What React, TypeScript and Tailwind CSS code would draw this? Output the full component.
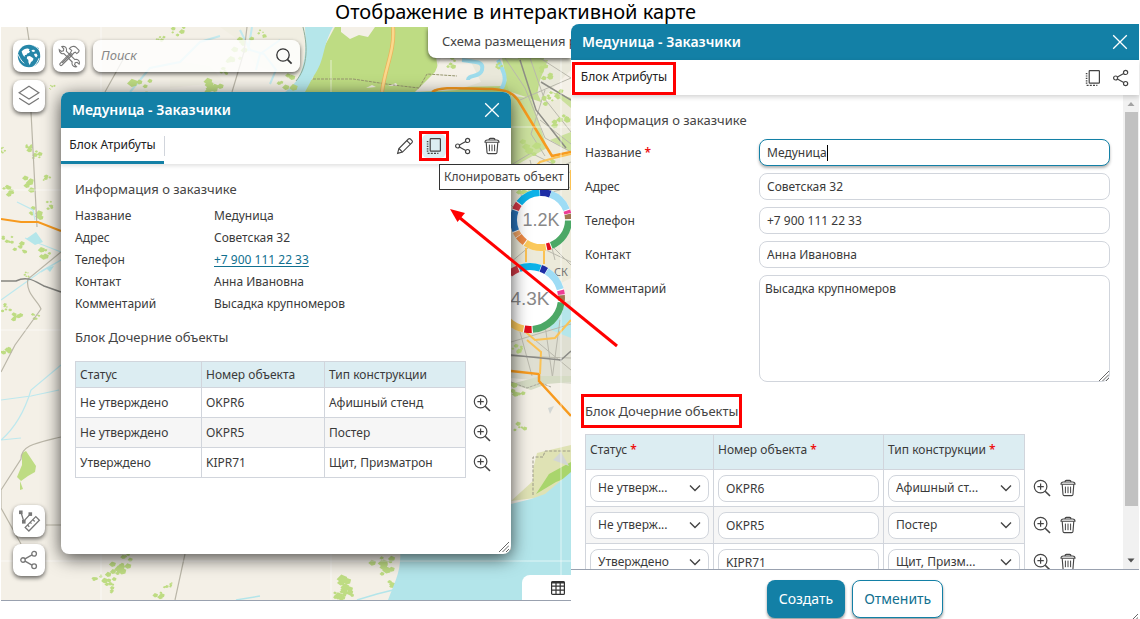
import { useState } from 'react';
import type { ReactNode } from 'react';

/* ---------- icons ---------- */

function Svg({ size = 18, sw = 1.2, className = '', children }: { size?: number; sw?: number; className?: string; children: ReactNode }) {
  return (
    <svg width={size} height={size} viewBox="0 0 18 18" fill="none" stroke="currentColor" strokeWidth={sw} aria-hidden="true" className={`shrink-0 ${className}`}>
      {children}
    </svg>
  );
}

const CloseIcon = () => <Svg sw={1.3}><path d="M2.2 2.2l13.6 13.6M15.8 2.2L2.2 15.8" /></Svg>;

const PencilIcon = () => (
  <Svg sw={1.1}>
    <path d="M1.6 16.4l1.3-4.9L12.4 2a1.4 1.4 0 0 1 2 0l1.6 1.6a1.4 1.4 0 0 1 0 2L6.5 15.1z" />
    <path d="M2.9 11.5l3.6 3.6M10.8 3.6l3.6 3.6" />
  </Svg>
);

const CloneIcon = () => (
  <Svg>
    <rect x="5.2" y="1.6" width="10.2" height="12.6" rx="0.6" />
    <path d="M2.6 4v12" strokeDasharray="1.2 1.2" strokeWidth="1.6" />
    <path d="M2.6 16.4h10.8" strokeDasharray="2 1.2" />
  </Svg>
);

const ShareIcon = ({ size = 18 }: { size?: number }) => (
  <Svg size={size}>
    <circle cx="3.6" cy="9" r="2" />
    <circle cx="13.6" cy="3.4" r="2.1" />
    <circle cx="13.6" cy="14.6" r="2.1" />
    <path d="M5.4 8l6.3-3.6M5.4 10l6.3 3.6" />
  </Svg>
);

const TrashIcon = () => (
  <Svg sw={1.1}>
    <path d="M2 5.2c0-1.5.8-2.2 2.3-2.2h9.4c1.5 0 2.3.7 2.3 2.2zM6 2.8c0-1 .6-1.4 1.4-1.4h3.2c.8 0 1.4.4 1.4 1.4" />
    <path d="M3.2 5.4l.8 10c.1.8.6 1.2 1.3 1.2h7.4c.7 0 1.2-.4 1.3-1.2l.8-10" />
    <path d="M6.4 7.6v6.6M9 7.6v6.6M11.6 7.6v6.6" strokeWidth="1" />
  </Svg>
);

const ZoomInIcon = () => (
  <Svg>
    <circle cx="7.6" cy="7.6" r="6.3" />
    <path d="M4.4 7.6h6.4M7.6 4.4v6.4" />
    <path d="M12.2 12.2l4.8 4.8" strokeWidth="1.6" />
  </Svg>
);

const SearchIcon = () => (
  <Svg sw={1.3}>
    <circle cx="8" cy="8" r="6.2" />
    <path d="M12.6 12.6l4 4" strokeWidth="1.7" />
  </Svg>
);

const LayersIcon = () => (
  <Svg size={24} sw={0.9}>
    <path d="M9 1.6l7.4 4.9L9 11.2 1.6 6.5z" />
    <path d="M1.6 10.6L9 15.4l7.4-4.8" />
  </Svg>
);

const ToolsIcon = () => (
  <svg width="24" height="24" viewBox="0 0 24 24" fill="none" stroke="#777" strokeWidth="1.1" aria-hidden="true">
    <path d="M2.2 5.6l2.2 1.8 2-.6.4-2-1.9-2.2c2-.8 4.4.5 4.6 2.6.1.9 0 1.4-.2 2l8.6 8.4c1.8-.7 4.2.2 4.5 2.6.1.8 0 1.4-.3 2l-2-1.900-1.900.5-.6 1.900 1.900 2c-1.800.5-4.200-.6-4.500-2.900-.1-.7 0-1.300.2-1.800L6.900 9.600c-1.900.6-4.800-.9-4.700-4z" />
    <path d="M13.200 9.200L3 19.600c-.9.9.8 2.600 1.700 1.700L15.200 11" />
    <path d="M12.400 4.600c1.400-2 4.600-3.100 6.700-1.300l3 3-.4 1.600-1.900 1.700-1.500-1.400-1.300.6-1.700 1.800-1.900-1.800 1.300-2.400z" />
    <path d="M5.200 19L14 10.200" />
  </svg>
);

const MeasureIcon = () => (
  <svg width="24" height="24" viewBox="0 0 24 24" fill="none" stroke="#777" strokeWidth="1.300" aria-hidden="true">
    <path d="M4 3.200l2.700 9L13 5.400" />
    <g fill="#777" stroke="none">
      <rect x="2" y="1.500" width="3.600" height="3.600" />
      <rect x="5" y="11" width="3.600" height="3.600" />
      <rect x="11.500" y="3.300" width="3.600" height="3.600" />
    </g>
    <path d="M8.200 18.400L18.800 7.600l3.600 3.700L11.900 22z" />
    <path d="M10.500 16l1.800 1.800M13.200 13.300l1.300 1.300M15.800 10.600l1.900 1.900" />
  </svg>
);

const GlobeIcon = () => (
  <svg width="24" height="24" viewBox="0 0 24 24" aria-hidden="true">
    <circle cx="12" cy="12" r="11.200" fill="#2586a8" />
    <path d="M14.500.8l7 3.200 1.700 9.200-2-1.500z" fill="#2586a8" />
    <path d="M4.600 7.600c1.700-2.200 4-3.200 6.400-3l1.600 1-.8 1.200 1.300.8-1.100 1.400-1.800.5-.8 1.500-1.700.1.600 1.400-1.400-.3-1.200-1.700z" fill="#fff" />
    <path d="M10.200 12.600l2.600-.5 2.400 1.400 1.400 1.200-1.100 2.200-1.500 1.100-1.300 3-1.200-2.400-.2-2.600-1.500-1.500z" fill="#fff" />
    <path d="M14.600 6l2.400-.3 1.200 1.300-1.300 1-2-.6zM17 10l2.400-.5 1.200 2-1.300 2-1.500-1.200z" fill="#fff" />
    <path d="M.5 9.500c1.800 2.900 3 7 6.600 9.800M14 .4c3.200 1.700 6.200 2.300 9 7M15.500 23.200c3-2 5.200-5.300 6.500-9" fill="none" stroke="#fff" strokeWidth=".9" />
  </svg>
);

const GridIcon = () => (
  <svg width="14" height="14" viewBox="0 0 14 14" fill="none" stroke="#333" strokeWidth="1.200" aria-hidden="true">
    <rect x=".6" y=".6" width="12.800" height="12.800" rx="1" />
    <path d="M.6 1.500h12.800" strokeWidth="2" />
    <path d="M.6 5.200h12.800M.6 9.200h12.800M5 1v12.400M9.200 1v12.400" />
  </svg>
);

const Grip = () => (
  <svg width="10" height="10" viewBox="0 0 10 10" stroke="#666" strokeWidth="1" aria-hidden="true">
    <path d="M0 10L10 0M3.500 10L10 3.500M7 10l3-3" />
  </svg>
);

const Chevron = () => (
  <svg width="12" height="12" viewBox="0 0 12 12" fill="none" stroke="#444" strokeWidth="1.400" aria-hidden="true" className="pointer-events-none absolute top-1/2 right-2 -translate-y-1/2">
    <path d="M1 3.500l5 5 5-5" />
  </svg>
);

/* ---------- map ---------- */

type Segment = [number, number, string];

const SMALL_RING: Segment[] = [
  [-2, 20, '#1e2ea6'], [20, 68, '#9edcf5'], [70, 77, '#ee3d96'], [78, 88, '#a07850'], [91, 158, '#4ca866'], [160, 168, '#e30e1c'],
  [170, 214, '#fbc95c'], [216, 234, '#ee8a45'], [235, 245, '#f0a566'], [247, 290, '#2b75bd'], [292, 306, '#d43a47'], [308, 357, '#0cb2e8'],
];
const BIG_RING: Segment[] = [
  [-20, 19, '#0cb2e8'], [20, 31, '#1e2ea6'], [32, 74, '#9edcf5'], [76, 84, '#ee3d96'], [85, 95, '#a07850'], [98, 175, '#4ca866'],
  [177, 190, '#e30e1c'], [192, 250, '#fbc95c'], [252, 318, '#2b75bd'], [320, 338, '#d43a47'],
];

function arc(cx: number, cy: number, r: number, from: number, to: number) {
  const p = (a: number) => {
    const t = ((a - 90) * Math.PI) / 180;
    return `${(cx + r * Math.cos(t)).toFixed(2)} ${(cy + r * Math.sin(t)).toFixed(2)}`;
  };
  return `M${p(from)}A${r} ${r} 0 0 1 ${p(to)}`;
}

function Cluster({ cx, cy, r, label, size, segments }: { cx: number; cy: number; r: number; label: string; size: number; segments: Segment[] }) {
  return (
    <g>
      <circle cx={cx} cy={cy} r={r} fill="#fff" />
      {segments.map(([a, b, c]) => <path key={a} d={arc(cx, cy, r - 3.5, a, b)} stroke={c} strokeWidth="7" fill="none" />)}
      <text x={cx} y={cy + size * 0.36} textAnchor="middle" fontSize={size} fill="#888" fontFamily="Liberation Sans, sans-serif">{label}</text>
    </g>
  );
}

const GROVES: [number, number, number][] = [
  [25, 184, 5], [36, 212, 5], [9, 190, 4], [45, 253, 5], [34, 153, 4], [28, 144, 3], [18, 319, 4], [36, 318, 3], [6, 308, 3], [5, 352, 4],
  [19, 247, 4], [8, 238, 4], [50, 205, 3], [46, 178, 3], [27, 275, 2], [3, 150, 2], [70, 58, 3], [52, 88, 2], [140, 86, 7], [205, 86, 6], [215, 88, 5],
  [235, 55, 6], [246, 45, 5], [286, 80, 6], [160, 40, 3], [178, 31, 4], [262, 33, 3], [224, 72, 3], [118, 568, 6], [125, 560, 5], [108, 578, 5],
  [114, 588, 4], [97, 578, 3], [160, 597, 4], [168, 586, 3], [380, 558, 6], [388, 566, 6], [343, 587, 7], [350, 595, 5], [337, 598, 5],
  [394, 582, 4], [518, 388, 5], [519, 428, 4], [530, 148, 6], [560, 120, 5], [550, 165, 4], [545, 100, 4], [525, 190, 5], [560, 180, 5],
  [500, 66, 3], [548, 72, 5], [556, 96, 4], [450, 62, 4], [516, 350, 4],
];

/* Scatters a few irregular patches around each grove's centre. */
function grovePath([x, y, r]: [number, number, number], seed: number) {
  const rnd = (n: number) => {
    const v = Math.sin(seed * 37.7 + n * 91.3) * 4373.1;
    return v - Math.floor(v);
  };
  let d = '';
  for (let k = 0; k < 6; k++) {
    const px = x + (rnd(k) - 0.5) * r * 2.8;
    const py = y + (rnd(k + 9) - 0.5) * r * 2.6;
    const s = r * (0.35 + rnd(k + 20) * 0.5);
    d += `M${px.toFixed(1)} ${(py - s * 0.7).toFixed(1)}l${s.toFixed(1)} ${(s * 0.4).toFixed(1)} ${(-s * 0.2).toFixed(1)} ${(s * 0.8).toFixed(1)} ${(-s * 0.8).toFixed(1)} ${(s * 0.2).toFixed(1)} ${(-s * 0.8).toFixed(1)} ${(-s * 0.6).toFixed(1)}z`;
  }
  return d;
}

const STREETS =
  'M505 58l20 30 20 50 26 14M520 100l51-22M530 58l14 40 27 34M511 165l20-12 40 20M540 58l31 20M545 90l-14 44 14 22M511 190l60-28M511 205l60 60M530 160l25 100M511 262l60-50M525 240l46 22M511 342l60-18M520 332l12 44M545 325l8 56M560 320l-8 60M511 356l60 2M535 340l36 30M511 175l30 20 30-8M540 120l31 24M520 190l14 60';

function MapCanvas() {
  return (
    <svg className="absolute inset-0 size-full" viewBox="1 27 570 573" preserveAspectRatio="xMidYMin slice" role="img" aria-label="Карта">
      <rect x="1" y="27" width="570" height="573" fill="#f4f0e7" />
      <path d="M220 27l20 14 16 24 20 8 30 8V27zM170 60l40 6 14 16-54 6z" fill="#f1eee2" />
      <path d="M240 30l10 20 14 4 12 16-6 14M252 27l-4 24M130 92l20-24 30-6 20-20 20-6M280 40l-20 14-4 16" stroke="#c3e9ee" strokeWidth="2" fill="none" />

      <path d="M334 27h240v40l-32 32-4 40 33 8v26H511V92H300l14-24z" fill="#e9e8da" />
      <path d="M335 27h97l8 58 20 2 44-1 14-28h26l-8 42-18 50H300V92l13-14 4-18z" fill="#bedc83" />
      <path d="M502 58l46 2-12 30 20 44-22 20-12-40-14-26z" fill="#c3dd8e" />
      <path d="M341 27h34l-7 10-9-2-9 4-9-7zM415 92l20-20 6-14 30 4 10 20-24 8zM388 86l8-3 2 3zM366 88l6-3 4 2z" fill="#f4f0e7" />
      <path d="M305 27h28c-12 22-7 32-20 50l-8 15h-20c18-12 22-32 20-65z" fill="#b5e6ea" />
      <path d="M303 27c6 24 3 42-7 54" stroke="#8fae9a" strokeWidth="1" fill="none" />
      <path d="M462 60c16 2 22 2 20 10s-14 4-14 10M498 60c6 12 10 20 3 29" stroke="#9edcec" strokeWidth="4" fill="none" />
      <path d="M313 79h40l40 6 26 3 8-14 30 2" stroke="#96966e" strokeDasharray="3 1" fill="none" />

      <path d="M511 92l30 10 30-4v180l-60 30z" fill="#eceada" />
      <path d="M511 96l20 2 16 50-36 20zM550 140l21-8v20zM552 92l19 6v10z" fill="#cbe09d" />
      <path d="M511 320l60-20v84l-60-6z" fill="#dfdfd2" />
      <path d="M540 300l31 8v30l-20-8z" fill="#b5e6ea" />
      <path d={STREETS} stroke="#b9b8ac" strokeWidth="1" fill="none" />
      <path d="M520 60l16 50 30 38M571 100l-30-18" stroke="#8d8d86" strokeWidth="1.500" fill="none" />
      <path d="M511 384l20 6 16-6 24-2v-6h-30z" fill="#d5dbc4" />
      <path d="M511 382l16 6 14-5 10 4" stroke="#aaa99c" strokeDasharray="3 1" fill="none" />

      {GROVES.map((g, i) => <path key={i} d={grovePath(g, i + 1)} fill="#bedc83" />)}
      <path d="M22 453l4-2 10 15-1 6-7 4-7 5-4-4 5-12zM20 481l3 8-3 1z" fill="#bedc83" />

      <path d="M17 202l16 8 2 10M25 238l36 14M61 260l-18 10-42 30M1 400l30-4 28-6M1 440c14-12 24-30 30-50l30-25M1 440l20-2M61 260l-20 12" stroke="#bde8ee" strokeWidth="1.200" fill="none" />
      <path d="M26 239l10-7 7 10-8 3z M46 268l8-2-4 6z" fill="#b5e6ea" />
      <path d="M31 112l6 115M61 252L28 279c-3 14 10 22 13 30L15 345 1 372M61 437c-24 6-40 8-40 22L1 490v18l20 36M46 525h15M185 554l-10 46M27 27l2 13M105 92l20-36M232 92l12-40 3-25" stroke="#bab6a8" strokeWidth="1.200" fill="none" />
      <path d="M1 281h15c12-6 20 1 28 5l17 6" stroke="#858580" strokeWidth="1.500" fill="none" />
      <path d="M1 219l20 3h17l23 9" stroke="#f79a1e" strokeWidth="2" fill="none" />
      <path d="M393 27c2 24-8 40-11 65" stroke="#e9b45c" strokeWidth="4" fill="none" />
      <path d="M393 27c2 24-8 40-11 65" stroke="#fbd88c" strokeWidth="2.500" fill="none" />
      <path d="M432 92c8-5 20-4 60-3 14 1 20 3 26 11l34 56 19-4M511 371l28 3v7l32 35" stroke="#f79a1e" strokeWidth="2.500" fill="none" />
      <path d="M532 170l8-8 14-4 17-4M527 340l14 12-1 22M571 170v20M544 250v14M526 248v14M571 320l-16 18-20 2-14-12" stroke="#fbc254" strokeWidth="2" fill="none" />
      <path d="M511 355l50 5 10-9" stroke="#8a8a86" strokeWidth="1.500" fill="none" />

      <path d="M511 501l22-20v-12l4-16 34-8v32l-28 20z" fill="#dfe2b4" />
      <path d="M536 494l20-12 15-6v-14l-22 12z" fill="#a9d56c" />
      <path d="M548 408l6-2-4 8zM553 460l8-8 8 14z" fill="#d2d6d4" />
      <path d="M533 495v-38h10l2-6h26" stroke="#9c9a88" strokeDasharray="3 1.500" fill="none" />
      <path d="M388 600c6-16 14-30 12-50h111v-46l20-5 14-5 26-22v128z" fill="#b3e5ea" />
      <path d="M357 600l20-6 16-4M236 600l24-4" stroke="#b3e5ea" strokeWidth="1.500" fill="none" />
      <path d="M101 27v65M1 190h60M1 330h60M1 561h570M101 554v46M331 554v46M561 58v542M331 60v32M511 127h60" stroke="#fff" strokeOpacity=".6" fill="none" />

      <Cluster cx={541} cy={220} r={31} label="1.2K" size={18} segments={SMALL_RING} />
      <text x="554" y="276" fontSize="11" fill="#777" fontFamily="Noto Sans, sans-serif">СК</text>
      <Cluster cx={530} cy={298} r={35} label="4.3K" size={19} segments={BIG_RING} />
    </svg>
  );
}

/* ---------- shared data ---------- */

const OBJECTS = [
  { status: 'Не утверждено', shortStatus: 'Не утверж...', number: 'OKPR6', type: 'Афишный стенд', shortType: 'Афишный ст...' },
  { status: 'Не утверждено', shortStatus: 'Не утверж...', number: 'OKPR5', type: 'Постер', shortType: 'Постер' },
  { status: 'Утверждено', shortStatus: 'Утверждено', number: 'KIPR71', type: 'Щит, Призматрон', shortType: 'Щит, Призм...' },
];

const DETAILS: [string, ReactNode][] = [
  ['Название', 'Медуница'],
  ['Адрес', 'Советская 32'],
  ['Телефон', <a href="tel:+79001112233" className="text-[#11708f] underline underline-offset-2">+7 900 111 22 33</a>],
  ['Контакт', 'Анна Ивановна'],
  ['Комментарий', 'Высадка крупномеров'],
];

function MapButton({ label, children }: { label: string; children: ReactNode }) {
  return (
    <button type="button" aria-label={label} className="flex size-8 items-center justify-center rounded-lg bg-white text-[#777] shadow-[0_2px_4px_rgba(0,0,0,0.6)]">
      {children}
    </button>
  );
}

function IconButton({ label, children }: { label: string; children: ReactNode }) {
  return <button type="button" aria-label={label} className="flex shrink-0 text-[#444]">{children}</button>;
}

function WindowHeader() {
  return (
    <header className="flex h-9 shrink-0 items-center justify-between bg-[#1380a6] pr-[10px] pl-[11px] text-white">
      <h2 className="text-sm font-semibold">Медуница - Заказчики</h2>
      <button type="button" aria-label="Закрыть" className="flex">
        <CloseIcon />
      </button>
    </header>
  );
}

/* ---------- left: object card over the map ---------- */

function ObjectCard() {
  return (
    <section className="absolute top-[65px] left-[60px] flex h-[462px] w-[450px] flex-col rounded-lg bg-white shadow-[0_4px_18px_rgba(0,0,0,0.7)]">
      <div className="overflow-hidden rounded-t-lg">
        <WindowHeader />
      </div>
      <div className="flex h-9 shrink-0 items-stretch justify-between pr-[10px] shadow-[0_2px_4px_rgba(0,0,0,0.12)]">
        <button type="button" className="flex w-[103px] items-center justify-center border-b-3 border-[#1380a6] text-xs whitespace-nowrap text-[#222]">
          Блок Атрибуты
        </button>
        <div className="mr-auto h-5 w-px self-center bg-gray-300" />
        <div className="flex items-center gap-[11px]">
          <IconButton label="Редактировать"><PencilIcon /></IconButton>
          <div className="relative -mx-[6px]">
            <button type="button" aria-label="Клонировать объект" className="flex size-[30px] items-center justify-center border-3 border-[#f00] bg-white text-[#444]">
              <span className="flex size-6 items-center justify-center rounded-md bg-[#dcedf2]"><CloneIcon /></span>
            </button>
            <div role="tooltip" className="absolute top-[33px] left-5 z-10 border border-[#333] bg-white px-1 py-[3px] text-xs leading-[18px] whitespace-nowrap text-[#444]">
              Клонировать объект
            </div>
          </div>
          <IconButton label="Поделиться"><ShareIcon /></IconButton>
          <IconButton label="Удалить"><TrashIcon /></IconButton>
        </div>
      </div>
      <div className="flex-1 px-[14px] pt-[15px] text-xs text-[#3a3a3a]">
        <h3 className="text-[13px] leading-5 text-[#444]">Информация о заказчике</h3>
        <dl className="mt-[6px] grid grid-cols-[139px_1fr] leading-[22px]">
          {DETAILS.map(([name, value]) => (
            <div key={name} className="contents">
              <dt>{name}</dt>
              <dd>{value}</dd>
            </div>
          ))}
        </dl>
        <h3 className="mt-[12px] text-[13px] leading-5 text-[#444]">Блок Дочерние объекты</h3>
        <table className="mt-[14px] w-full table-fixed border-collapse text-left">
          <colgroup>
            <col className="w-[126px]" />
            <col className="w-[123px]" />
            <col />
            <col className="w-[32px]" />
          </colgroup>
          <thead>
            <tr className="h-[26px]">
              {['Статус', 'Номер объекта', 'Тип конструкции'].map((h) => (
                <th key={h} scope="col" className="border border-gray-300 bg-[#dcedf2] px-1 font-normal">{h}</th>
              ))}
              <td />
            </tr>
          </thead>
          <tbody>
            {OBJECTS.map((o) => (
              <tr key={o.number} className="group h-[30px]">
                {[o.status, o.number, o.type].map((v) => (
                  <td key={v} className="border border-gray-300 px-1 group-even:bg-[#f6f6f6]">{v}</td>
                ))}
                <td className="pl-[7px]"><IconButton label={`Показать ${o.number}`}><ZoomInIcon /></IconButton></td>
              </tr>
            ))}
          </tbody>
        </table>
      </div>
      <div className="flex justify-end p-[2px]"><Grip /></div>
    </section>
  );
}

function MapPanel() {
  return (
    <div className="relative mt-[3px] -mr-px mb-[18px] ml-px overflow-hidden border-b border-gray-400">
      <MapCanvas />
      <div className="relative flex h-full flex-col justify-between py-[13px] pl-3">
        <div className="flex flex-col gap-2">
          <div className="flex gap-2">
            <MapButton label="Глобус"><GlobeIcon /></MapButton>
            <MapButton label="Инструменты"><ToolsIcon /></MapButton>
            <label className="flex h-8 w-[207px] items-center rounded-lg bg-white/80 pr-[7px] pl-2 text-[#333] shadow-[0_2px_4px_rgba(0,0,0,0.6)]">
              <input type="search" aria-label="Поиск" placeholder="Поиск" className="min-w-0 flex-1 bg-transparent text-[13px] italic outline-none placeholder:text-[#888]" />
              <SearchIcon />
            </label>
          </div>
          <MapButton label="Слои"><LayersIcon /></MapButton>
        </div>
        <div className="mb-[11px] flex flex-col gap-[7px]">
          <MapButton label="Измерения"><MeasureIcon /></MapButton>
          <MapButton label="Поделиться картой"><ShareIcon size={20} /></MapButton>
        </div>
      </div>
      <div className="absolute top-0 right-0 h-[31px] w-[143px] overflow-hidden rounded-bl-lg bg-white pl-[14px] text-[13px] leading-7 whitespace-nowrap text-[#444] shadow-[0_2px_4px_rgba(0,0,0,0.6)]">
        Схема размещения р
      </div>
      <button type="button" aria-label="Таблица" className="absolute right-0 bottom-0 flex h-[25px] w-[49px] items-center justify-end rounded-tl-lg bg-white pr-[6px]">
        <GridIcon />
      </button>
      <ObjectCard />
    </div>
  );
}

/* ---------- right: clone form ---------- */

const Star = () => <span className="font-semibold text-[#e11]">*</span>;

const FIELD = 'h-[27px] w-full rounded-lg border border-gray-300 bg-white px-[7px] text-xs text-[#3a3a3a] outline-none';

const FIELDS = [
  { id: 'name', label: 'Название', value: 'Медуница', required: true },
  { id: 'address', label: 'Адрес', value: 'Советская 32' },
  { id: 'phone', label: 'Телефон', value: '+7 900 111 22 33' },
  { id: 'contact', label: 'Контакт', value: 'Анна Ивановна' },
];

function Dropdown({ value, label }: { value: string; label: string }) {
  return (
    <div className="relative">
      <select aria-label={label} className={`${FIELD} appearance-none pr-6`} defaultValue={value}>
        <option>{value}</option>
      </select>
      <Chevron />
    </div>
  );
}

function CloneForm() {
  const [values, setValues] = useState<Record<string, string>>(Object.fromEntries(FIELDS.map((f) => [f.id, f.value])));
  return (
    <form className="z-10 ml-px flex min-h-0 flex-col overflow-hidden rounded-tl-lg bg-white pr-px" onSubmit={(e) => e.preventDefault()}>
      <WindowHeader />
      <div className="z-10 flex h-[35px] shrink-0 items-center justify-between bg-white pr-[9px] pl-px shadow-[0_2px_5px_rgba(0,0,0,0.18)]">
        <button type="button" className="mt-[2px] h-[33px] w-[104px] border-3 border-[#f00] pb-[3px] text-xs whitespace-nowrap text-[#222]">Блок Атрибуты</button>
        <div className="flex items-center gap-[10px]">
          <IconButton label="Клонировать объект"><CloneIcon /></IconButton>
          <IconButton label="Поделиться"><ShareIcon /></IconButton>
        </div>
      </div>

      <div className="flex min-h-0 flex-1 border-b border-gray-400">
        <div className="flex-1 overflow-y-auto pt-[15px] pr-[13px] pl-[14px] text-xs text-[#3a3a3a] [scrollbar-width:none]">
          <h3 className="text-[13px] leading-5 text-[#444]">Информация о заказчике</h3>
          <div className="mt-[9px] grid grid-cols-[174px_1fr] gap-y-[7px]">
            {FIELDS.map((f) => (
              <div key={f.id} className="contents">
                <label htmlFor={f.id} className="leading-[27px]">{f.label} {f.required && <Star />}</label>
                <div className="relative">
                  <input
                    id={f.id}
                    value={values[f.id]}
                    onChange={(e) => setValues({ ...values, [f.id]: e.target.value })}
                    className={f.required ? 'h-[27px] w-full rounded-lg border border-[#1380a6] bg-white px-[7px] text-xs text-[#3a3a3a] shadow-[0_2px_3px_rgba(0,0,0,0.3)] outline-none' : FIELD}
                  />
                  {f.required && (
                    <span aria-hidden="true" className="pointer-events-none absolute top-[6px] left-2 flex text-xs">
                      <span className="invisible">{values[f.id]}</span>
                      <span className="h-4 w-px bg-black" />
                    </span>
                  )}
                </div>
              </div>
            ))}
            <label htmlFor="comment" className="leading-[27px]">Комментарий</label>
            <div className="relative">
              <textarea id="comment" defaultValue="Высадка крупномеров" className="block h-[107px] w-full resize-none rounded-lg border border-gray-300 px-[5px] py-[3px] text-xs leading-5 outline-none" />
              <span className="pointer-events-none absolute right-px bottom-px"><Grip /></span>
            </div>
          </div>
          <h3 className="mt-[12px] -ml-1 w-fit border-3 border-[#f00] px-px py-[4px] text-[13px] leading-5 text-[#444]">Блок Дочерние объекты</h3>
          <table className="mt-[6px] w-[493px] table-fixed border-collapse text-left">
            <colgroup>
              <col className="w-[128px]" />
              <col className="w-[170px]" />
              <col className="w-[141px]" />
              <col />
            </colgroup>
            <thead>
              <tr className="h-[35px]">
                {['Статус', 'Номер объекта', 'Тип конструкции'].map((h) => (
                  <th key={h} scope="col" className="border border-gray-300 bg-[#dcedf2] px-1 pb-1 font-normal whitespace-nowrap">{h} <Star /></th>
                ))}
                <td />
              </tr>
            </thead>
            <tbody>
              {OBJECTS.map((o) => (
                <tr key={o.number} className="group h-[37px]">
                  <td className="border border-gray-300 px-1 group-even:bg-[#f6f6f6]"><Dropdown value={o.shortStatus} label="Статус" /></td>
                  <td className="border border-gray-300 px-1 group-even:bg-[#f6f6f6]"><input aria-label="Номер объекта" defaultValue={o.number} className={FIELD} /></td>
                  <td className="border border-gray-300 px-1 group-even:bg-[#f6f6f6]"><Dropdown value={o.shortType} label="Тип конструкции" /></td>
                  <td className="pl-2">
                    <div className="flex gap-2">
                      <IconButton label={`Показать ${o.number}`}><ZoomInIcon /></IconButton>
                      <IconButton label={`Удалить ${o.number}`}><TrashIcon /></IconButton>
                    </div>
                  </td>
                </tr>
              ))}
            </tbody>
          </table>
        </div>
        <div aria-hidden="true" className="flex w-4 shrink-0 flex-col items-center bg-[#f1f1f1]">
          <svg width="16" height="17" viewBox="0 0 16 17"><path d="M4.500 11L8 7l3.500 4z" fill="#a3a3a3" /></svg>
          <div className="w-[13px] grow-[395] bg-[#c1c1c1]" />
          <div className="grow-[46]" />
          <svg width="16" height="17" viewBox="0 0 16 17"><path d="M4.500 6.500L8 10.500l3.500-4z" fill="#505050" /></svg>
        </div>
      </div>

      <footer className="relative flex h-[49px] shrink-0 items-end justify-center gap-[7px] pb-px">
        <button type="submit" className="h-[38px] rounded-lg bg-[#1380a6] px-3 text-sm text-white shadow-[0_2px_3px_rgba(0,0,0,0.4)]">Создать</button>
        <button type="button" className="h-[38px] rounded-lg border border-[#1380a6] bg-white px-[11px] text-sm text-[#11708f] shadow-[0_2px_3px_rgba(0,0,0,0.4)]">Отменить</button>
        <span className="absolute right-px bottom-0 h-[7px] w-2 overflow-hidden"><Grip /></span>
      </footer>
    </form>
  );
}

export default function App() {
  return (
    <div className="flex h-screen flex-col bg-white font-['Noto_Sans','Open_Sans',sans-serif]">
      <h1 className="h-6 shrink-0 pl-[335px] text-xl leading-6 whitespace-nowrap text-black">Отображение в интерактивной карте</h1>
      <main className="relative grid min-h-0 flex-1 grid-cols-2">
        <MapPanel />
        <CloneForm />
        <svg aria-hidden="true" width="168" height="140" viewBox="0 0 168 140" className="pointer-events-none absolute top-[184px] left-[450px] z-20">
          <path d="M10 10L167 138" stroke="#f00" strokeWidth="3" />
          <path d="M0 1L15 5 7.500 14z" fill="#f00" />
        </svg>
      </main>
    </div>
  );
}
